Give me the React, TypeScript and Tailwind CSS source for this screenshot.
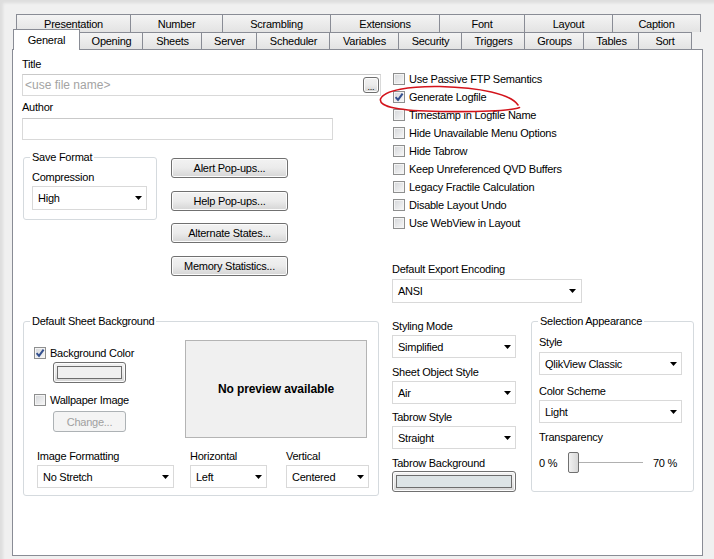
import type { ReactNode } from "react";

const backTabs = [
  { label: "Presentation", w: "w-[114px]" },
  { label: "Number", w: "w-[92px]" },
  { label: "Scrambling", w: "w-[108px]" },
  { label: "Extensions", w: "w-[109px]" },
  { label: "Font", w: "w-[85px]" },
  { label: "Layout", w: "w-[88px]" },
  { label: "Caption", w: "w-[89px] border-r" },
];

const frontTabs = [
  { label: "Opening", w: "w-[64px]" },
  { label: "Sheets", w: "w-[60px]" },
  { label: "Server", w: "w-[56px]" },
  { label: "Scheduler", w: "w-[74px]" },
  { label: "Variables", w: "w-[70px]" },
  { label: "Security", w: "w-[64px]" },
  { label: "Triggers", w: "w-[64px]" },
  { label: "Groups", w: "w-[60px]" },
  { label: "Tables", w: "w-[56px]" },
  { label: "Sort", w: "w-[54px] border-r" },
];

const options = [
  { label: "Use Passive FTP Semantics", checked: false },
  { label: "Generate Logfile", checked: true },
  { label: "Timestamp in Logfile Name", checked: false },
  { label: "Hide Unavailable Menu Options", checked: false },
  { label: "Hide Tabrow", checked: false },
  { label: "Keep Unreferenced QVD Buffers", checked: false },
  { label: "Legacy Fractile Calculation", checked: false },
  { label: "Disable Layout Undo", checked: false },
  { label: "Use WebView in Layout", checked: false },
];

function Label({ children, className = "" }: { children: ReactNode; className?: string }) {
  return <div className={`h-[14px] leading-[14px] whitespace-nowrap ${className}`}>{children}</div>;
}

function Select({ value, className }: { value: string; className: string }) {
  return (
    <div className={`flex items-center justify-between bg-white border border-[#d9d9d9] pl-[5px] pr-[4px] ${className}`}>
      <span className="whitespace-nowrap">{value}</span>
      <svg width="7" height="4" viewBox="0 0 7 4">
        <path d="M0 0h7L3.5 4z" fill="#000" />
      </svg>
    </div>
  );
}

function Btn({ children, className }: { children?: ReactNode; className: string }) {
  return (
    <div
      className={`flex items-center justify-center rounded-[3px] border border-[#707070] bg-linear-to-b from-[#f2f2f2] via-[#ebebeb] to-[#d5d5d5] shadow-[inset_0_0_0_1px_#fcfcfc] ${className}`}
    >
      {children}
    </div>
  );
}

function Check({ checked }: { checked: boolean }) {
  return (
    <span className="flex items-center justify-center w-[12px] h-[12px] shrink-0 border border-[#8e8f8f] bg-linear-to-br from-[#d4d6d9] to-[#f8f8f8] shadow-[inset_0_0_0_1px_#f4f4f4]">
      {checked && (
        <svg width="10" height="10" viewBox="0 0 10 10">
          <path d="M1.6 5.2 L4 7.9 L8.6 1.6" fill="none" stroke="#34508f" strokeWidth="2" />
        </svg>
      )}
    </span>
  );
}

function CheckRow({ label, checked, className = "" }: { label: string; checked: boolean; className?: string }) {
  return (
    <div className={`flex items-center gap-[4px] h-[18px] whitespace-nowrap ${className}`}>
      <Check checked={checked} />
      <span>{label}</span>
    </div>
  );
}

function Group({ title, className, children }: { title: string; className: string; children: ReactNode }) {
  return (
    <div className={`relative rounded-[3px] border border-[#d5dade] ${className}`}>
      <span className="absolute -top-[8px] left-[6px] bg-white px-[2px] leading-[14px] whitespace-nowrap">{title}</span>
      {children}
    </div>
  );
}

function ColorButton({ fill, className }: { fill: string; className: string }) {
  return (
    <Btn className={`p-[3px] ${className}`}>
      <div className={`w-full h-full border border-[#6d6d6d] ${fill}`} />
    </Btn>
  );
}

export default function App() {
  return (
    <div className="relative w-[714px] h-[559px] overflow-hidden bg-[#f0f0f0] text-[11px] leading-[14px] tracking-[-0.25px] text-black font-['Liberation_Sans',Arial,sans-serif] shadow-[inset_3px_3px_3px_rgba(0,0,0,0.08)]">
      {/* back tab row */}
      <div className="flex ml-[16px] pt-[14px] h-[32px]">
        {backTabs.map((t) => (
          <div
            key={t.label}
            className={`flex items-center justify-center h-[18px] border-l border-t border-[#898c95] bg-linear-to-b from-[#f4f4f4] to-[#e3e3e3] ${t.w}`}
          >
            {t.label}
          </div>
        ))}
      </div>

      {/* front tab row */}
      <div className="flex items-end ml-[13px] -mt-[3px] h-[20px]">
        <div className="relative z-10 -mb-px flex items-center justify-center w-[67px] h-[21px] pb-[1px] border-l border-r border-t border-[#898c95] bg-white">
          General
        </div>
        {frontTabs.map((t) => (
          <div
            key={t.label}
            className={`-ml-px flex items-center justify-center h-[17px] border-l border-t border-[#898c95] bg-linear-to-b from-[#f4f4f4] to-[#e3e3e3] ${t.w}`}
          >
            {t.label}
          </div>
        ))}
      </div>

      {/* panel */}
      <div className="ml-[12px] w-[691px] h-[507px] border border-[#898c95] bg-white">
        <div className="flex items-start">
          {/* left column */}
          <div className="ml-[9px] w-[360px] pt-[7px]">
            <Label>Title</Label>
            <div className="mt-[3px] flex items-center justify-between h-[22px] w-[359px] border border-[#d9d9d9] border-t-[#c9c9c9] pl-[2px] pr-[1px]">
              <span className="text-[12px] tracking-normal text-[#a3a3a3]">&lt;use file name&gt;</span>
              <Btn className="w-[16px] h-[16px] items-end text-[9px] leading-[10px]">...</Btn>
            </div>
            <Label className="mt-[4px]">Author</Label>
            <div className="mt-[4px] h-[22px] w-[311px] border border-[#d9d9d9] border-t-[#c9c9c9]" />

            <div className="flex items-start mt-[17px] ml-[1px]">
              <Group title="Save Format" className="w-[134px] h-[63px] pt-[12px] pl-[8px]">
                <Label>Compression</Label>
                <Select value="High" className="mt-[2px] w-[115px] h-[24px]" />
              </Group>
              <div className="ml-[14px] mt-[1px] flex flex-col">
                <Btn className="w-[117px] h-[20px]">Alert Pop-ups...</Btn>
                <Btn className="w-[117px] h-[20px] mt-[13px]">Help Pop-ups...</Btn>
                <Btn className="w-[117px] h-[20px] mt-[12px]">Alternate States...</Btn>
                <Btn className="w-[117px] h-[20px] mt-[13px]">Memory Statistics...</Btn>
              </div>
            </div>
          </div>

          {/* right column */}
          <div className="ml-[10px] pt-[20px]">
            <div className="pl-[1px]">
              {options.map((o) => (
                <CheckRow key={o.label} label={o.label} checked={o.checked} />
              ))}
            </div>
            <Label className="mt-[30px]">Default Export Encoding</Label>
            <Select value="ANSI" className="mt-[3px] w-[190px] h-[24px] pr-[5px]" />
          </div>
        </div>

        {/* lower section */}
        <div className="flex items-start mt-[16px]">
          <Group title="Default Sheet Background" className="ml-[10px] mt-[2px] w-[356px] h-[175px] pt-[18px] pl-[10px]">
            <div className="flex items-start">
              <div className="w-[151px] mt-[4px]">
                <CheckRow label="Background Color" checked />
                <ColorButton fill="bg-[#f0f0f0]" className="ml-[19px] w-[73px] h-[21px]" />
                <CheckRow label="Wallpaper Image" checked={false} className="mt-[8px]" />
                <div className="ml-[19px] mt-[2px] flex items-center justify-center w-[73px] h-[21px] rounded-[3px] border border-[#adb2b5] bg-[#f4f4f4] text-[#a0a0a0]">
                  Change...
                </div>
              </div>
              <div className="flex items-center justify-center w-[182px] h-[98px] border border-[#b4b4b4] bg-[#f0f0f0] text-[12px] tracking-[-0.1px] font-bold">
                No preview available
              </div>
            </div>
            <div className="flex mt-[11px] ml-[3px]">
              <div className="w-[137px]">
                <Label>Image Formatting</Label>
                <Select value="No Stretch" className="mt-[2px] w-[137px] h-[23px]" />
              </div>
              <div className="ml-[16px] w-[77px]">
                <Label>Horizontal</Label>
                <Select value="Left" className="mt-[2px] w-[77px] h-[23px]" />
              </div>
              <div className="ml-[19px] w-[83px]">
                <Label>Vertical</Label>
                <Select value="Centered" className="mt-[2px] w-[83px] h-[23px]" />
              </div>
            </div>
          </Group>

          <div className="ml-[13px] w-[124px]">
            <Label>Styling Mode</Label>
            <Select value="Simplified" className="mt-[2px] w-[124px] h-[23px]" />
            <Label className="mt-[7px]">Sheet Object Style</Label>
            <Select value="Air" className="mt-[2px] w-[124px] h-[23px]" />
            <Label className="mt-[6px]">Tabrow Style</Label>
            <Select value="Straight" className="mt-[2px] w-[124px] h-[23px]" />
            <Label className="mt-[7px]">Tabrow Background</Label>
            <ColorButton fill="bg-[#dde4e6]" className="mt-[1px] w-[124px] h-[21px]" />
          </div>

          <Group title="Selection Appearance" className="ml-[15px] mt-[2px] w-[163px] h-[171px] pt-[13px] pl-[7px]">
            <Label>Style</Label>
            <Select value="QlikView Classic" className="mt-[3px] w-[143px] h-[23px]" />
            <Label className="mt-[9px]">Color Scheme</Label>
            <Select value="Light" className="mt-[2px] w-[143px] h-[23px]" />
            <Label className="mt-[7px]">Transparency</Label>
            <div className="mt-[8px] flex items-center h-[21px]">
              <span className="w-[29px]">0 %</span>
              <div className="w-[11px] h-[21px] rounded-[2px] border border-[#707070] bg-linear-to-r from-[#f2f2f2] to-[#d8d8d8]" />
              <div className="w-[64px] h-[2px] border-t border-[#b0b0b0] border-b border-b-[#ffffff] bg-[#e6e6e6]" />
              <span className="ml-[10px]">70 %</span>
            </div>
          </Group>
        </div>
      </div>

      {/* red hand-drawn mark */}
      <svg className="absolute inset-0 pointer-events-none" width="714" height="559" viewBox="0 0 714 559">
        <path
          d="M518 105 C511 94, 480 87.5, 440 86.5 C410 86, 384 90, 380.5 99 C378.5 107, 400 111, 440 111.5 C480 112, 510 111, 519.5 107.5"
          fill="none"
          stroke="#d3141c"
          strokeWidth="1.6"
          strokeLinecap="round"
        />
      </svg>
    </div>
  );
}
